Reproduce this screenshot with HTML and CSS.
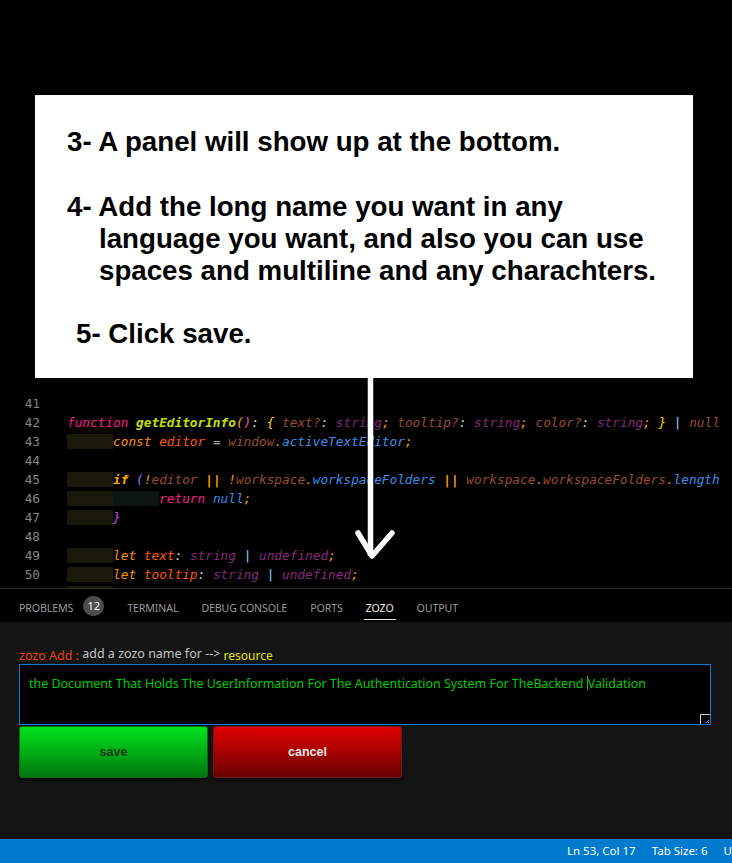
FILE: index.html
```html
<!DOCTYPE html>
<html lang="en">
<head>
<meta charset="utf-8">
<title>zozo</title>
<link rel="stylesheet" href="styles.css">
</head>
<body>
<div class="screen">
  <div class="top">
    <div class="note">
      <p class="step">3- A panel will show up at the bottom.</p>
      <p class="step step-4">4- Add the long name you want in any<br>language you want, and also you can use<br>spaces and multiline and any charachters.</p>
      <p class="step step-5">5- Click save.</p>
    </div>
  </div>

  <div class="editor">
    <div class="line"><span class="ln">41</span><span class="code"></span></div>
    <div class="line"><span class="ln">42</span><span class="code"><span class="k-fn">function</span> <span class="k-name">getEditorInfo</span><span class="k-p1">(</span><span class="k-p2">)</span><span class="k-op">:</span> <span class="k-b1">{</span> <span class="k-var">text</span><span class="k-var">?</span><span class="k-op">:</span> <span class="k-type">string</span><span class="k-semi">;</span> <span class="k-var">tooltip</span><span class="k-var">?</span><span class="k-op">:</span> <span class="k-type">string</span><span class="k-semi">;</span> <span class="k-var">color</span><span class="k-var">?</span><span class="k-op">:</span> <span class="k-type">string</span><span class="k-semi">;</span> <span class="k-b1">}</span> <span class="k-pipe">|</span> <span class="k-var">null</span></span></div>
    <div class="line"><span class="ln">43</span><span class="code"><span class="ind1">      </span><span class="k-const">const</span> <span class="k-decl">editor</span> <span class="k-eq">=</span> <span class="k-var">window</span><span class="k-semi">.</span><span class="k-mem">activeTextEditor</span><span class="k-semi">;</span></span></div>
    <div class="line"><span class="ln">44</span><span class="code"></span></div>
    <div class="line"><span class="ln">45</span><span class="code"><span class="ind1">      </span><span class="k-if">if</span> <span class="k-p3">(</span><span class="k-semi">!</span><span class="k-var">editor</span> <span class="k-or">||</span> <span class="k-semi">!</span><span class="k-var">workspace</span><span class="k-semi">.</span><span class="k-mem">workspaceFolders</span> <span class="k-or">||</span> <span class="k-var">workspace</span><span class="k-semi">.</span><span class="k-var">workspaceFolders</span><span class="k-semi">.</span><span class="k-mem">length</span></span></div>
    <div class="line"><span class="ln">46</span><span class="code"><span class="ind1">      </span><span class="ind2">      </span><span class="k-fn">return</span> <span class="k-mem">null</span><span class="k-semi">;</span></span></div>
    <div class="line"><span class="ln">47</span><span class="code"><span class="ind1">      </span><span class="k-b2">}</span></span></div>
    <div class="line"><span class="ln">48</span><span class="code"></span></div>
    <div class="line"><span class="ln">49</span><span class="code"><span class="ind1">      </span><span class="k-const">let</span> <span class="k-decl">text</span><span class="k-op">:</span> <span class="k-type">string</span> <span class="k-pipe">|</span> <span class="k-type">undefined</span><span class="k-semi">;</span></span></div>
    <div class="line"><span class="ln">50</span><span class="code"><span class="ind1">      </span><span class="k-const">let</span> <span class="k-decl">tooltip</span><span class="k-op">:</span> <span class="k-type">string</span> <span class="k-pipe">|</span> <span class="k-type">undefined</span><span class="k-semi">;</span></span></div>
    <div class="line"><span class="ln"></span><span class="code"><span class="ind1">      </span></span></div>
  </div>

  <div class="panel">
    <div class="tabs">
      <div class="tab">PROBLEMS <span class="badge">12</span></div>
      <div class="tab">TERMINAL</div>
      <div class="tab">DEBUG CONSOLE</div>
      <div class="tab">PORTS</div>
      <div class="tab active">ZOZO</div>
      <div class="tab">OUTPUT</div>
    </div>
    <div class="panel-body">
      <div class="prompt"><span class="prompt-title">zozo Add :</span> <span class="prompt-text">add a zozo name for --&gt;</span> <span class="prompt-kind">resource</span></div>
      <div class="input">
        <div class="input-text">the Document That Holds The UserInformation For The Authentication System For TheBackend <span class="caret"></span>Validation</div>
        <svg class="grip" width="10" height="10" viewBox="0 0 10 10"><path d="M0.5 10V0.5H10" fill="none" stroke="#d0d0d0" stroke-width="1"/><path d="M9 6L6 9M9 8L8 9" stroke="#8a8a8a" stroke-width="1"/></svg>
      </div>
      <div class="actions">
        <button class="btn btn-save">save</button>
        <button class="btn btn-cancel">cancel</button>
      </div>
    </div>
  </div>

  <div class="status">
    <div class="status-left"></div>
    <div class="status-right">
      <span class="status-item">Ln 53, Col 17</span>
      <span class="status-item">Tab Size: 6</span>
      <span class="status-item">U</span>
    </div>
  </div>

  <svg class="arrow" width="50" height="195" viewBox="0 0 50 195">
    <path d="M20.5 0V186" stroke="#fff" stroke-width="5.5" fill="none"/>
    <path d="M8 163L22 186L42 163" stroke="#fff" stroke-width="5.5" fill="none" stroke-linecap="round" stroke-linejoin="round"/>
  </svg>
</div>
</body>
</html>
```
FILE: styles.css
```css
* { box-sizing: border-box; }
html, body { margin: 0; padding: 0; background: #000; }
body {
  width: 732px;
  height: 863px;
  overflow: hidden;
  font-family: "Noto Sans", "Open Sans", sans-serif;
}
.screen {
  position: relative;
  height: 863px;
  display: flex;
  flex-direction: column;
}

/* annotation */
.top { padding: 95px 0 0 35px; flex: none; }
.note {
  width: 658px;
  height: 283px;
  background: #fff;
  padding: 31px 0 0 32px;
  font-family: "Liberation Sans", Arial, sans-serif;
  font-weight: bold;
  font-size: 27.7px;
  line-height: 32px;
  color: #000;
}
.note p { margin: 0; white-space: nowrap; }
.note .step-4 { margin-top: 33px; padding-left: 32px; text-indent: -32px; }
.note .step-5 { margin-top: 31px; margin-left: 9px; }

/* editor */
.editor {
  flex: none;
  height: 210px;
  padding-top: 16px;
  overflow: hidden;
  font-family: "DejaVu Sans Mono", "Liberation Mono", monospace;
  font-size: 12.75px;
  line-height: 19px;
}
.line { display: flex; height: 19px; white-space: pre; }
.ln { width: 40px; flex: none; text-align: right; color: #858585; }
.code { margin-left: 27px; font-style: italic; }
.ind1 { background: #18180b; }
.ind2 { background: #0c150f; }
.k-fn { color: #ff1a8c; }
.k-name { color: #c2e000; font-weight: bold; }
.k-p1 { color: #ffb300; }
.k-p2 { color: #ff4fa8; }
.k-p3 { color: #8a7dff; }
.k-b1 { color: #ffd700; }
.k-b2 { color: #c850ff; }
.k-op { color: #cfe3ea; }
.k-eq { color: #b0b0b0; }
.k-var { color: #9a4e2b; }
.k-type { color: #872a7a; }
.k-semi { color: #ff9a00; }
.k-pipe { color: #8fd0ff; }
.k-const { color: #ff9500; }
.k-decl { color: #ff5a00; }
.k-mem { color: #3c8fe8; }
.k-if { color: #ffa500; font-weight: bold; }
.k-or { color: #ffa000; font-weight: bold; }

/* panel */
.panel {
  flex: 1;
  display: flex;
  flex-direction: column;
  border-top: 1px solid #333;
}
.tabs {
  flex: none;
  height: 33px;
  background: #000;
  display: flex;
  align-items: center;
  gap: 19px;
  padding-left: 17px;
}
.tab {
  display: flex;
  align-items: center;
  gap: 10px;
  padding: 8px 2px 3px;
  border-bottom: 1px solid transparent;
  font-size: 10.6px;
  line-height: 16px;
  letter-spacing: -0.1px;
  color: #9b9b9b;
}
.tab.active { color: #ececec; border-bottom-color: #e7e7e7; }
.badge {
  width: 21px;
  height: 20px;
  margin-top: -5px;
  margin-bottom: -2px;
  border-radius: 10px;
  background: #4d4d4d;
  color: #fff;
  font-size: 11px;
  letter-spacing: 0;
  display: flex;
  align-items: center;
  justify-content: center;
}
.panel-body {
  flex: 1;
  background: #141414;
  padding: 26px 21px 0 19px;
}
.prompt { font-size: 12.5px; line-height: 16px; white-space: nowrap; }
.prompt-title { color: #e8400c; }
.prompt-text { color: #c4c4c4; position: relative; top: -2px; }
.prompt-kind { color: #e6e600; font-size: 12px; }
.input {
  position: relative;
  height: 61px;
  border: 1px solid #0e7ad5;
  background: #000;
  padding: 10px 9px 9px;
}
.input-text {
  color: #00cc00;
  font-size: 12.45px;
  line-height: 18px;
  white-space: nowrap;
  overflow: hidden;
}
.caret {
  display: inline-block;
  width: 1px;
  height: 14px;
  background: #00cc00;
  vertical-align: -2px;
}
.grip { position: absolute; right: 0; bottom: 0; }
.actions { display: flex; gap: 5px; margin-top: 1px; }
.btn {
  width: 189px;
  height: 52px;
  border-radius: 3px;
  font-family: "Liberation Sans", Arial, sans-serif;
  font-weight: bold;
  font-size: 12.5px;
  box-shadow: 0 2px 3px rgba(0,0,0,0.6);
  cursor: pointer;
}
.btn-save {
  background: linear-gradient(#00e41e, #00760c);
  border: 1px solid #0b6a14;
  color: #173a17;
}
.btn-cancel {
  background: linear-gradient(#e20202, #6a0000);
  border: 1px solid #6a1a1a;
  color: #f3e6e6;
}

/* status bar */
.status {
  flex: none;
  height: 24px;
  background: #007acc;
  display: flex;
  overflow: hidden;
  color: #fff;
  font-size: 11.5px;
  line-height: 24px;
}
.status-left { flex: 0 0 559px; }
.status-right { display: flex; flex: none; gap: 0; }
.status-item { padding: 0 8px; white-space: nowrap; }

/* annotation arrow */
.arrow { position: absolute; left: 350px; top: 370px; }
```
